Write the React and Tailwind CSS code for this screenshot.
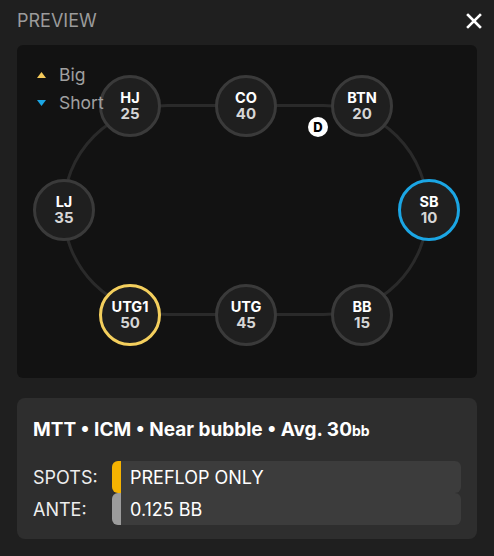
import React from "react";

const seats = [
  { name: "HJ", stack: 25, left: "left-[82px]", top: "top-[30px]", ring: "border-[#3a3a3a]" },
  { name: "CO", stack: 40, left: "left-[198px]", top: "top-[30px]", ring: "border-[#3a3a3a]" },
  { name: "BTN", stack: 20, left: "left-[314px]", top: "top-[30px]", ring: "border-[#3a3a3a]" },
  { name: "LJ", stack: 35, left: "left-[16px]", top: "top-[134px]", ring: "border-[#3a3a3a]" },
  { name: "SB", stack: 10, left: "left-[381px]", top: "top-[134px]", ring: "border-[#1ba6e4]" },
  { name: "UTG1", stack: 50, left: "left-[82px]", top: "top-[239px]", ring: "border-[#f4cf5d]" },
  { name: "UTG", stack: 45, left: "left-[198px]", top: "top-[239px]", ring: "border-[#3a3a3a]" },
  { name: "BB", stack: 15, left: "left-[314px]", top: "top-[239px]", ring: "border-[#3a3a3a]" },
];

const Seat = ({ seat }) => (
  <div
    className={`absolute ${seat.left} ${seat.top} w-[62px] h-[62px] rounded-full border-[3px] ${seat.ring} bg-[#1f1f1f] flex flex-col items-center justify-center`}
  >
    <span className="text-[14.5px] leading-[16px] font-bold text-white">{seat.name}</span>
    <span className="text-[15px] leading-[16px] font-bold text-[#d6d6d6]">{seat.stack}</span>
  </div>
);

const InfoRow = ({ label, value, stripe }) => (
  <div className="flex items-center">
    <div className="w-[79px] text-[18px] text-[#ededed]">{label}</div>
    <div className="flex-1 h-[32px] flex rounded-md overflow-hidden bg-[#3c3c3c]">
      <div className={`w-[9px] ${stripe}`} />
      <div className="pl-[9px] flex items-center text-[18px] text-white">{value}</div>
    </div>
  </div>
);

export default function App() {
  return (
    <div
      className="w-[494px] h-[556px] bg-[#1f1f1f] px-[17px]"
      style={{ fontFamily: "Inter, 'Noto Sans', sans-serif" }}
    >
      {/* header */}
      <div className="h-[45px] pb-[4px] flex items-center justify-between -mr-[5px]">
        <span className="text-[18px] text-[#9b9b9b]">PREVIEW</span>
        <button className="w-[16px] h-[16px]">
          <svg viewBox="0 0 16 16" width="16" height="16">
            <path d="M2 2 L14 14 M14 2 L2 14" stroke="white" strokeWidth="2.6" strokeLinecap="square" />
          </svg>
        </button>
      </div>

      {/* table */}
      <div className="relative h-[333px] bg-[#121212] rounded-md">
        <div className="absolute left-[45px] top-[59px] w-[367px] h-[212px] rounded-full border-[3px] border-[#2a2a2a]" />
        {seats.map((s) => (
          <Seat key={s.name} seat={s} />
        ))}
        <div className="absolute left-[291px] top-[72px] w-[20px] h-[20px] rounded-full bg-white flex items-center justify-center">
          <span className="text-[13px] leading-none font-extrabold text-black">D</span>
        </div>
        <div className="absolute left-[20px] top-[16px] flex flex-col">
          <div className="h-[28px] flex items-center">
            <svg width="9" height="6" viewBox="0 0 9 6">
              <path d="M4.5 0 L9 6 L0 6 Z" fill="#f4c95a" />
            </svg>
            <span className="ml-[13px] text-[17.5px] text-[#a0a0a0]">Big</span>
          </div>
          <div className="h-[28px] flex items-center">
            <svg width="9" height="6" viewBox="0 0 9 6">
              <path d="M0 0 L9 0 L4.5 6 Z" fill="#1ba6e4" />
            </svg>
            <span className="ml-[13px] text-[17.5px] text-[#a0a0a0]">Short</span>
          </div>
        </div>
      </div>

      {/* summary card */}
      <div className="mt-[20px] h-[141px] bg-[#2e2e2e] rounded-lg px-4 pt-5">
        <div className="h-[24px] text-[19px] leading-[24px] font-bold text-white">
          MTT • ICM • Near bubble • Avg. 30<span className="text-[14px]">bb</span>
        </div>
        <div className="mt-[19px] flex flex-col">
          <InfoRow label="SPOTS:" value="PREFLOP ONLY" stripe="bg-[#f5b301]" />
          <InfoRow label="ANTE:" value="0.125 BB" stripe="bg-[#9c9c9c]" />
        </div>
      </div>
    </div>
  );
}
